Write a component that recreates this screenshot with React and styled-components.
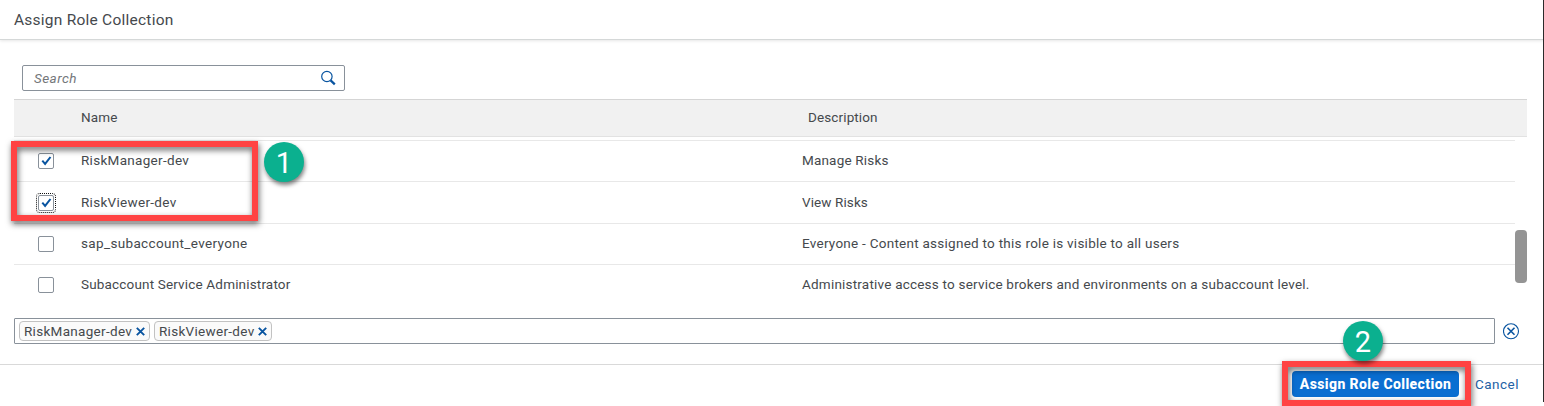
import React from "react";
import styled, { createGlobalStyle, css } from "styled-components";

const GlobalStyle = createGlobalStyle`
  *, *::before, *::after { box-sizing: border-box; }
  body { margin: 0; background: #fff; }
`;

const Dialog = styled.main`
  position: relative;
  width: 1544px;
  height: 406px;
  overflow: hidden;
  display: flex;
  flex-direction: column;
  background: #fff;
  color: #45494d;
  font-family: Roboto, "Open Sans", sans-serif;
  font-size: 13.5px;
`;

const Text = styled.span`
  white-space: nowrap;
  letter-spacing: ${(p) => p.$spacing ?? 0.3}px;
`;

const Header = styled.header`
  height: 40px;
  flex: none;
  display: flex;
  align-items: center;
  padding: 0 14px;
  border-bottom: 1px solid #d5d8d8;
  box-shadow: 0 1px 3px rgba(0, 0, 0, 0.1);
`;

const Title = styled.h1`
  margin: 0;
  font-size: 15.5px;
  font-weight: 400;
`;

const SearchField = styled.div`
  width: 323px;
  height: 26px;
  flex: none;
  margin: 25px 0 8px 22px;
  padding: 0 8px 0 11px;
  display: flex;
  align-items: center;
  justify-content: space-between;
  border: 1px solid #89919a;
  border-radius: 2px;
  color: #74777a;
  font-style: italic;
`;

const TableHead = styled.div`
  width: 1513px;
  height: 38px;
  flex: none;
  margin-left: 14px;
  padding-bottom: 2px;
  display: grid;
  grid-template-columns: 67px 727px 1fr;
  align-items: center;
  background: #f1f1f1;
  border-top: 1px solid #d5d5d5;
  border-bottom: 1px solid #e2e2e2;
`;

const TableBody = styled.div`
  width: 1513px;
  height: 181px;
  flex: none;
  margin-left: 14px;
  padding-top: 3px;
  display: flex;
`;

const Rows = styled.div`
  width: 1501px;
  border-top: 1px solid #e8e8e8;
`;

const Row = styled.div`
  height: ${(p) => p.$height}px;
  display: grid;
  grid-template-columns: 67px 721px 1fr;
  align-items: center;
  padding-bottom: ${(p) => (p.$last ? 4 : p.$height === 42 ? 2 : 3)}px;
  border-bottom: ${(p) => (p.$last ? "none" : "1px solid #e8e8e8")};
`;

const ScrollThumb = styled.div`
  width: 12px;
  height: 53px;
  margin-top: 90px;
  border-radius: 4px;
  background: #949494;
`;

const Checkbox = styled.span`
  width: 16px;
  height: 16px;
  margin: 2px 0 0 24px;
  display: flex;
  align-items: center;
  justify-content: center;
  border: 1px solid #89919a;
  border-radius: 2px;
  ${(p) =>
    p.$focused &&
    css`
      outline: 1px dotted #111;
      outline-offset: 1px;
    `}
`;

const TokenArea = styled.div`
  display: flex;
  align-items: center;
  gap: 8px;
  margin-left: 14px;
  height: 26px;
  flex: none;
`;

const TokenInput = styled.div`
  width: 1481px;
  height: 26px;
  display: flex;
  align-items: center;
  gap: 4px;
  padding-left: 4px;
  border: 1px solid #89919a;
  border-radius: 1px;
`;

const Token = styled.span`
  width: ${(p) => p.$width}px;
  height: 20px;
  display: flex;
  align-items: center;
  justify-content: space-between;
  padding: 0 4px;
  border: 1px solid #c2c2c2;
  border-radius: 4px;
  background: #fafafa;
`;

const Footer = styled.footer`
  height: 42px;
  flex: none;
  margin-top: 20px;
  padding: 6px 25px 0 0;
  display: flex;
  justify-content: flex-end;
  align-items: flex-start;
  gap: 16px;
  border-top: 1px solid #d9d9d9;
`;

const button = css`
  height: 26px;
  padding: 0;
  border: 0;
  font: inherit;
  line-height: 26px;
  text-align: center;
`;

const PrimaryButton = styled.button`
  ${button}
  width: 167px;
  border-radius: 4px;
  background: #0a6ed1;
  color: #fff;
  font-size: 14px;
  font-weight: 800;
`;

const LinkButton = styled.button`
  ${button}
  width: 44px;
  background: none;
  color: #2362a5;
`;

const WindowEdge = styled.div`
  position: absolute;
  top: 0;
  right: 0;
  width: 1px;
  height: 402px;
  background: #2b2b2b;
`;

const Highlight = styled.div`
  position: absolute;
  left: ${(p) => p.$x}px;
  top: ${(p) => p.$y}px;
  width: ${(p) => p.$w}px;
  height: ${(p) => p.$h}px;
  border: 6px solid #ff4343;
  filter: drop-shadow(1px 3px 3px rgba(0, 0, 0, 0.6));
`;

const StepBadge = styled.div`
  position: absolute;
  left: ${(p) => p.$x}px;
  top: ${(p) => p.$y}px;
  width: 40px;
  height: 40px;
  border-radius: 50%;
  background: #0bb08f;
  box-shadow: 1px 3px 4px rgba(0, 0, 0, 0.5);
  color: #fff;
  font: 29px/42px Roboto, sans-serif;
  text-align: center;
`;

const SearchIcon = () => (
  <svg width="16" height="16" viewBox="0 0 16 16" fill="none" stroke="#0854a0">
    <circle cx="6.9" cy="6.5" r="5.2" strokeWidth="1.2" />
    <path d="M10.6 10.4 14.8 14.4" strokeWidth="2.2" />
  </svg>
);

const CheckMark = () => (
  <svg width="12" height="12" viewBox="0 0 12 12" fill="none" stroke="#0854a0" strokeWidth="2">
    <path d="M2.3 5.7 5.1 8.9 10.5 2" />
  </svg>
);

const RemoveIcon = () => (
  <svg width="9" height="9" viewBox="0 0 9 9" fill="none" stroke="#0854a0" strokeWidth="1.9">
    <path d="M.8.8 8.2 8.2M8.2.8.8 8.2" />
  </svg>
);

const ClearIcon = () => (
  <svg width="17" height="17" viewBox="0 0 17 17" fill="none" stroke="#0854a0">
    <circle cx="8" cy="8.3" r="7.5" strokeWidth="1.1" />
    <path d="M4.5 4.8 11.5 11.8M11.5 4.8 4.5 11.8" strokeWidth="1.6" />
  </svg>
);

const roles = [
  { name: "RiskManager-dev", description: "Manage Risks", descSpacing: 0.18, checked: true, height: 41 },
  { name: "RiskViewer-dev", description: "View Risks", descSpacing: 0.1, checked: true, focused: true, height: 42 },
  {
    name: "sap_subaccount_everyone",
    nameSpacing: 0.35,
    description: "Everyone - Content assigned to this role is visible to all users",
    descSpacing: 0.26,
    height: 41,
  },
  {
    name: "Subaccount Service Administrator",
    nameSpacing: 0.17,
    description: "Administrative access to service brokers and environments on a subaccount level.",
    descSpacing: 0.21,
    height: 41,
  },
];

export default function App() {
  return (
    <>
      <GlobalStyle />
      <Dialog>
        <Header>
          <Title><Text $spacing={0.24}>Assign Role Collection</Text></Title>
        </Header>
        <SearchField>
          <Text $spacing={0.45}>Search</Text>
          <SearchIcon />
        </SearchField>
        <TableHead>
          <span />
          <Text $spacing={0.15}>Name</Text>
          <Text $spacing={0.12}>Description</Text>
        </TableHead>
        <TableBody>
          <Rows>
            {roles.map((role, i) => (
              <Row key={role.name} $height={role.height} $last={i === roles.length - 1}>
                <Checkbox $focused={role.focused}>{role.checked && <CheckMark />}</Checkbox>
                <Text $spacing={role.nameSpacing}>{role.name}</Text>
                <Text $spacing={role.descSpacing}>{role.description}</Text>
              </Row>
            ))}
          </Rows>
          <ScrollThumb />
        </TableBody>
        <TokenArea>
          <TokenInput>
            <Token $width={131}><Text>RiskManager-dev</Text><RemoveIcon /></Token>
            <Token $width={118}><Text>RiskViewer-dev</Text><RemoveIcon /></Token>
          </TokenInput>
          <ClearIcon />
        </TokenArea>
        <Footer>
          <PrimaryButton><Text $spacing={0.4}>Assign Role Collection</Text></PrimaryButton>
          <LinkButton><Text $spacing={0.45}>Cancel</Text></LinkButton>
        </Footer>
        <WindowEdge />
        <Highlight $x={11} $y={141} $w={247} $h={80} />
        <Highlight $x={1282} $y={361} $w={189} $h={45} />
        <StepBadge $x={264} $y={142}>1</StepBadge>
        <StepBadge $x={1343} $y={321}>2</StepBadge>
      </Dialog>
    </>
  );
}
